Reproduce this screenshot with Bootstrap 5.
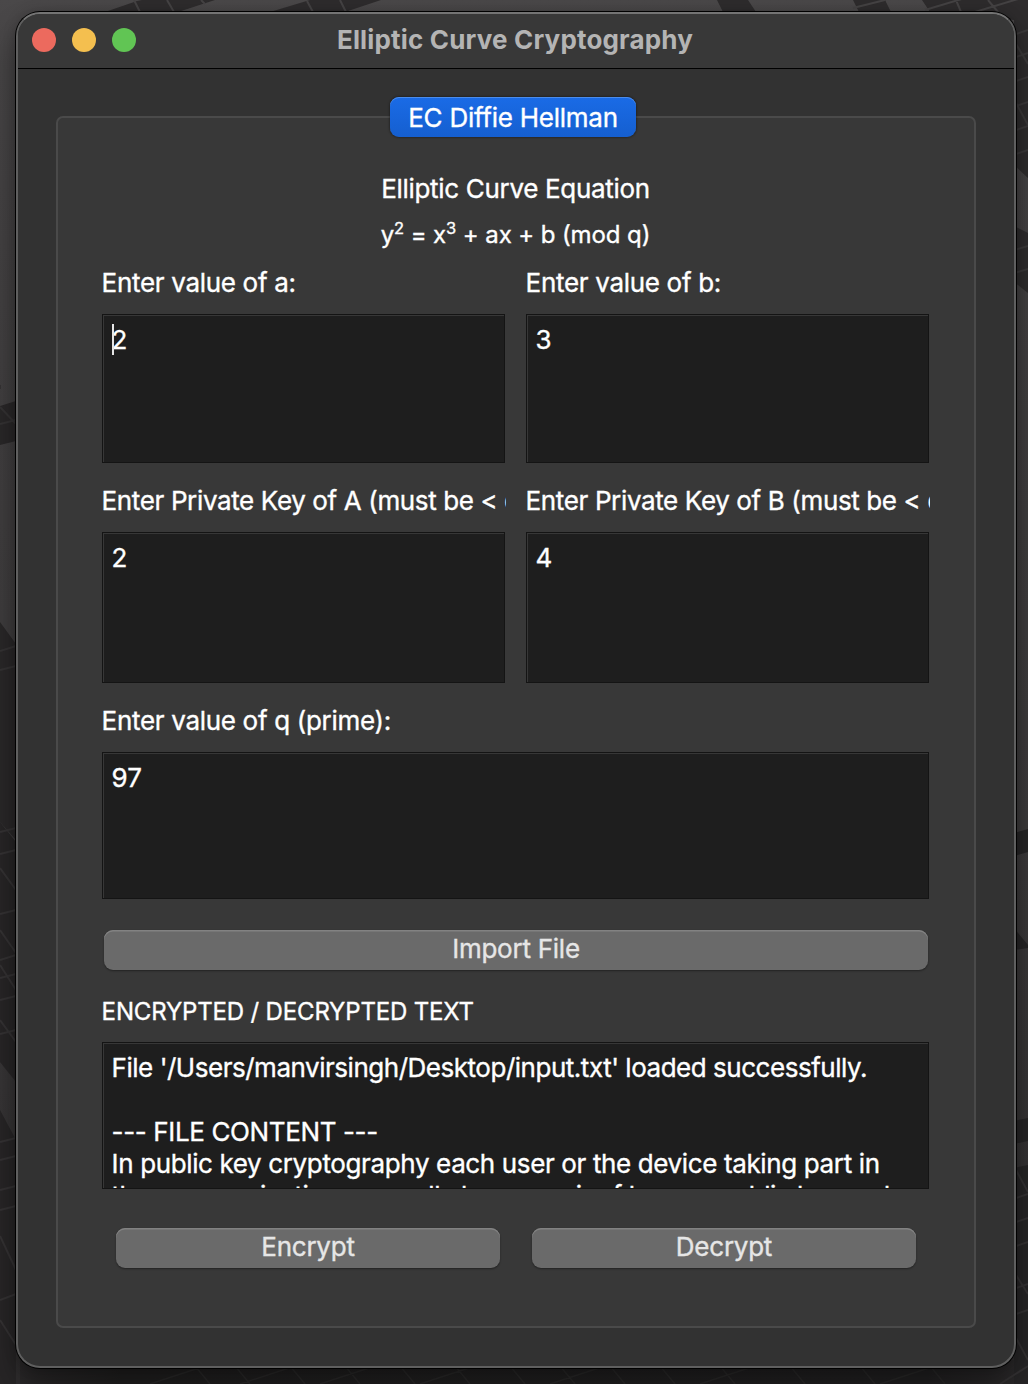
<!DOCTYPE html>
<html lang="en">
<head>
<meta charset="utf-8">
<meta name="viewport" content="width=device-width, initial-scale=1">
<title>Elliptic Curve Cryptography</title>
<link href="https://cdn.jsdelivr.net/npm/bootstrap@5.3.0/dist/css/bootstrap.min.css" rel="stylesheet">
<script src="https://cdn.jsdelivr.net/npm/bootstrap@5.3.0/dist/js/bootstrap.bundle.min.js"></script>
<style>
  body { width: 1028px; height: 1384px; background: #302e2f; font-family: Inter, sans-serif; font-size: 26px; line-height: 32px; color: #fff; letter-spacing: -.31px; -webkit-text-stroke: .35px currentColor; }
  .wallpaper { z-index: 0; }
  .app-window { z-index: 1; width: 1000px; height: 1356px; margin: 12px 12px 0 16px; border: 2px solid #5f5f5f; border-top-color: #747474; border-radius: 24px; background: #323232; box-shadow: 0 0 0 1px #000, 0 18px 30px rgba(0,0,0,.35), 0 0 14px rgba(0,0,0,.2); }
  .titlebar { height: 55px; padding-left: 14px; background: #383838; border-bottom: 1px solid #000; border-radius: 22px 22px 0 0; }
  .light { width: 24px; height: 24px; margin-bottom: 2px; }
  .win-title { font-weight: 700; color: #b4b4b4; letter-spacing: .17px; text-align: center; margin-left: -136px; line-height: 51px; height: 54px; -webkit-text-stroke: 0; }
  .tab-row { height: 40px; margin: 28px 38px 0; z-index: 2; padding-right: 6px; }
  .btn.tab-pill { width: 246px; height: 40px; padding: 2px 0 0; border: 0; border-radius: 9px; font-size: 26px; line-height: 38px; letter-spacing: -.25px; color: #fff; background: linear-gradient(#1a6be6, #155fd0); box-shadow: inset 0 1px 0 #4b8cec, 0 0 2px 1px rgba(0,0,0,.3); }
  .panel { margin: -21px 38px 0; height: 1212px; border: 2px solid #4a4a4a; border-radius: 7px; background: #383838; padding: 55px 45px 0 44px; }
  .eq { font-size: 24px; margin-top: 14px; letter-spacing: -.1px; white-space: pre; }
  .eq sup { font-size: 16.5px; line-height: 0; top: 0; vertical-align: 9px; }
  .pair { --bs-gutter-x: 21px; }
  .form-label { display: block; height: 32px; margin: 0 -1px 15px 0; white-space: nowrap; overflow: hidden; text-indent: -.4px; }
  .form-label.key { letter-spacing: -.37px; }
  .form-control.entry, .form-control.entry:focus { display: block; font-size: 26px; line-height: 32px; color: #fff; background: #1e1e1e; border: 1px solid #141414; border-radius: 0; box-shadow: inset 1px 1px 0 #373737; padding: 9px 8px 0 8.6px; overflow: hidden; white-space: pre; letter-spacing: 0; }
  .caret { left: 9px; top: 9px; width: 2px; height: 31px; background: #e6e6e6; }
  .btn.push { height: 40px; padding: 0 0 2px; border: 0; border-radius: 9px; font-size: 26px; line-height: 38px; color: #e6e6e6; letter-spacing: -.25px; background: #6a6a6a; box-shadow: inset 0 1.5px 0 #828282, 0 1px 2px rgba(0,0,0,.4); }
  .h-149 { height: 149px; } .h-151 { height: 151px; } .h-147 { height: 147px; }
  .mt-16 { margin-top: 16px; } .mt-22 { margin-top: 22px; }
  .import-row { margin: 31px 1px 0 2px; }
  .form-label.out-label { font-size: 24px; letter-spacing: -.16px; margin-top: 26px; margin-bottom: 14px; }
  .form-control.entry.output { letter-spacing: -.37px; }
  .snug { letter-spacing: -.475px; }
  .actions { gap: 32px; margin: 39px 13px 0 14px; }
</style>
</head>
<body class="position-relative overflow-hidden">
<svg class="wallpaper position-absolute top-0 start-0" width="1028" height="1384" viewBox="0 0 1028 1384">
  <defs>
    <linearGradient id="wall" x1="0" y1="0" x2="0" y2="1"><stop offset="0" stop-color="#4a4849"/><stop offset=".05" stop-color="#464445"/><stop offset=".3" stop-color="#403e3f"/><stop offset=".6" stop-color="#3c3a3b"/><stop offset="1" stop-color="#2f2d2e"/></linearGradient>
    <linearGradient id="foot" x1="0" y1="0" x2="1" y2="0"><stop offset="0" stop-color="#2a2829"/><stop offset=".1" stop-color="#201f1f"/><stop offset=".9" stop-color="#212021"/><stop offset="1" stop-color="#2c2a2b"/></linearGradient>
  </defs>
  <rect width="1028" height="1384" fill="url(#wall)"/>
  <rect x="20" y="1360" width="1008" height="24" fill="url(#foot)"/>
  <g fill="#2e2c2d">
    <path d="M105 12L137 1L142 0H215L178 12zM270 12L310 0H381L345 12zM717 0H748L756 12H723zM853 0H885L891 12H859zM922 0H1028V178L1014 165V20L930 12z"/>
    <path d="M1014 226L1028 233V293L1014 282z"/>
    <path d="M1014 833L1028 829V852L1014 856zM1014 928L1028 945V948L1014 950zM1014 1121L1028 1118V1141L1014 1144zM1014 1168L1028 1165V1384H1014z" fill="#262526"/>
    <path d="M0 406L16 401V441L0 445zM0 622L16 644V840L0 822z" fill="#292728"/>
    <path d="M0 822L16 842V1082L0 1062zM0 1110L16 1140V1384H0z" fill="#272526"/>
  </g>
  <g stroke="#454344" stroke-width="2" fill="none">
    <path d="M134 0L140 12M167 0L174 12M201 0L205 4M307 1L313 12M340 0L346 12M853 8L885 0M925 10L975 -5M956 0L961 12M988 0L998 12M975 12L1028 -4"/>
    <path d="M1016 34L1028 30M1016 44L1028 64M1016 57L1028 53M1016 81L1028 77M1016 103L1028 125M1016 106L1028 102M1016 130L1028 126M1016 154L1028 150M1014 250L1028 246M1014 273L1028 269" stroke="#3b393a"/>
    <path d="M0 407L16 424M0 385L0 386M0 388L0 388M0 388L0 389M0 387L0 388M0 386L0 387M0 424L16 420M0 651L16 646M0 670L16 666M0 832L16 828M0 854L16 850M0 868L16 890M0 914L16 910M0 930L16 953M0 960L16 955M0 978L16 974M0 1000L16 996M0 965L16 990M0 1020L16 1042M0 1034L16 1030M0 1142L16 1138M0 1160L16 1156M0 1190L16 1186M0 1210L16 1206M0 1236L16 1270M0 1300L16 1294M0 1320L16 1345" stroke="#343233"/>
    <path d="M1016 1170L1028 1192M1016 1198L1028 1194M1016 1222L1028 1218M1016 1246L1028 1242M1016 1275L1028 1294M1016 1288L1028 1284M1016 1338L1028 1360M1000 1384L1028 1366M1016 1314L1028 1310" stroke="#343233"/>
    <path d="M150 1384L205 1366M195 1366L210 1384M235 1366L250 1384M240 1384L295 1366M290 1366L305 1384M320 1384L375 1366M345 1366L360 1384M400 1366L415 1384M420 1384L475 1366M455 1366L470 1384M510 1366L525 1384M550 1384L605 1366M560 1366L575 1384M610 1366L625 1384M660 1366L675 1384M700 1384L755 1366M720 1366L735 1384M790 1366L805 1384M860 1366L875 1384M880 1384L935 1366M930 1366L945 1384" stroke="#2a2929" stroke-width="1.5"/>
  </g>
</svg>

<main class="app-window position-relative">
  <header class="titlebar d-flex align-items-center">
    <svg class="light me-3" viewBox="0 0 24 24"><circle cx="12" cy="12" r="12" fill="#ec6a5e"/></svg>
    <svg class="light me-3" viewBox="0 0 24 24"><circle cx="12" cy="12" r="12" fill="#f4bf4f"/></svg>
    <svg class="light me-3" viewBox="0 0 24 24"><circle cx="12" cy="12" r="12" fill="#61c554"/></svg>
    <div class="win-title flex-grow-1">Elliptic Curve Cryptography</div>
  </header>

  <div class="tab-row d-flex justify-content-center position-relative">
    <button class="btn tab-pill" type="button">EC Diffie Hellman</button>
  </div>

  <section class="panel">
    <div class="text-center">Elliptic Curve Equation</div>
    <div class="eq text-center">y<sup>2</sup> = x<sup>3</sup> + ax + b (mod q)</div>

    <div class="row pair mt-16">
      <div class="col-6">
        <div class="form-label">Enter value of a:</div>
        <div class="form-control entry h-149 position-relative">2<span class="caret position-absolute"></span></div>
      </div>
      <div class="col-6">
        <div class="form-label">Enter value of b:</div>
        <div class="form-control entry h-149">3</div>
      </div>
    </div>
    <div class="row pair mt-22">
      <div class="col-6">
        <div class="form-label key">Enter Private Key of A (must be &lt; q):</div>
        <div class="form-control entry h-151">2</div>
      </div>
      <div class="col-6">
        <div class="form-label key">Enter Private Key of B (must be &lt; q):</div>
        <div class="form-control entry h-151">4</div>
      </div>
    </div>
    <div class="mt-22">
      <div class="form-label">Enter value of q (prime):</div>
      <div class="form-control entry h-147">97</div>
    </div>

    <div class="import-row d-grid">
      <button class="btn push" type="button">Import File</button>
    </div>

    <div class="form-label out-label">ENCRYPTED / DECRYPTED TEXT</div>
    <div class="form-control entry output h-147"><span class="snug">File '/Users/manvirsingh/Desktop/input.txt' loaded successfully.</span>

--- FILE CONTENT ---
In public key cryptography each user or the device taking part in
<span class="snug">the communication generally have a pair of keys, a public key and</span></div>

    <div class="actions d-flex">
      <button class="btn push flex-fill w-50" type="button">Encrypt</button>
      <button class="btn push flex-fill w-50" type="button">Decrypt</button>
    </div>
  </section>
</main>
</body>
</html>
